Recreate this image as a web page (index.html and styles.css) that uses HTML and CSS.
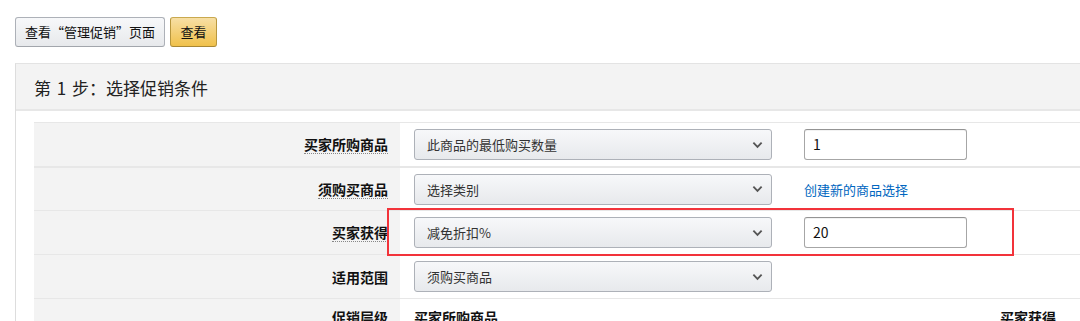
FILE: index.html
```html
<!DOCTYPE html>
<html lang="zh-CN">
<head>
<meta charset="utf-8">
<link rel="stylesheet" href="styles.css">
</head>
<body>
<div class="topbar">
  <button class="btn btn-default">查看“管理促销”页面</button>
  <button class="btn btn-primary">查看</button>
</div>
<div class="panel">
  <div class="panel-head">第 1 步：选择促销条件</div>
  <div class="panel-body">
    <div class="row">
      <div class="label"><span class="dotted">买家所购商品</span></div>
      <div class="field">
        <div class="select"><span>此商品的最低购买数量</span><svg class="chev" viewBox="0 0 12 8"><path d="M1.5 1.5 L6 6 L10.5 1.5" fill="none" stroke="#555" stroke-width="2"/></svg></div>
        <div class="input">1</div>
      </div>
    </div>
    <div class="row">
      <div class="label"><span class="dotted">须购买商品</span></div>
      <div class="field">
        <div class="select"><span>选择类别</span><svg class="chev" viewBox="0 0 12 8"><path d="M1.5 1.5 L6 6 L10.5 1.5" fill="none" stroke="#555" stroke-width="2"/></svg></div>
        <a class="link">创建新的商品选择</a>
      </div>
    </div>
    <div class="row highlight-row">
      <div class="label"><span class="dotted">买家获得</span></div>
      <div class="field">
        <div class="select"><span>减免折扣%</span><svg class="chev" viewBox="0 0 12 8"><path d="M1.5 1.5 L6 6 L10.5 1.5" fill="none" stroke="#555" stroke-width="2"/></svg></div>
        <div class="input">20</div>
      </div>
      <div class="redbox"></div>
    </div>
    <div class="row">
      <div class="label"><span>适用范围</span></div>
      <div class="field">
        <div class="select"><span>须购买商品</span><svg class="chev" viewBox="0 0 12 8"><path d="M1.5 1.5 L6 6 L10.5 1.5" fill="none" stroke="#555" stroke-width="2"/></svg></div>
      </div>
    </div>
    <div class="row last">
      <div class="label"><span>促销层级</span></div>
      <div class="field tier">
        <span class="tier-a">买家所购商品</span>
        <span class="tier-b">买家获得</span>
      </div>
    </div>
  </div>
</div>
</body>
</html>
```
FILE: styles.css
```css
html, body {
  margin: 0;
  padding: 0;
  background: #fff;
  overflow: hidden;
  font-family: "Noto Sans CJK SC", "Noto Sans", "Liberation Sans", sans-serif;
  color: #111;
}
.topbar {
  display: flex;
  gap: 5px;
  padding: 17px 0 0 15px;
}
.btn {
  height: 30px;
  border-radius: 3px;
  font-family: inherit;
  font-size: 13px;
  color: #111;
  padding: 0;
  cursor: pointer;
  line-height: 28px;
  white-space: nowrap;
  text-align: center;
}
.btn-default {
  width: 150px;
  background: linear-gradient(#f7f8fa, #e7e9ec);
  border: 1px solid #adb1b8;
  border-bottom-color: #a2a6ac;
}
.btn-primary {
  width: 47px;
  background: linear-gradient(#f7dfa5, #f0c14b);
  border: 1px solid #a88734;
  border-color: #c9a94f #b8973e #a88734;
}
.panel {
  margin: 16px 0 0 15px;
  width: 1120px;
  border-left: 1px solid #dddddd;
  border-top: 1px solid #e3e3e3;
}
.panel-head {
  height: 45px;
  background: #f3f3f3;
  border-bottom: 2px solid #e7e7e7;
  padding-left: 18px;
  font-size: 17px;
  line-height: 48px;
  color: #222;
  word-spacing: 2px;
}
.panel-body {
  padding: 11px 0 0 18px;
}
.row {
  display: flex;
  height: 43px;
  border-top: 1px solid #e7e7e7;
  position: relative;
}
.row:nth-child(2) {
  border-top-width: 2px;
  height: 42px;
}
.label {
  width: 354px;
  padding-right: 12px;
  background: #f3f3f3;
  display: flex;
  align-items: center;
  justify-content: flex-end;
  font-size: 14px;
  font-weight: bold;
  color: #111;
}
.dotted {
  border-bottom: 1px dotted #888;
  line-height: 18px;
}
.field {
  flex: 1;
  display: flex;
  align-items: center;
  padding-left: 14px;
}
.select {
  width: 344px;
  height: 29px;
  border: 1px solid #adb1b8;
  border-radius: 3px;
  background: linear-gradient(#f7f8fa, #e7e9ec);
  display: flex;
  align-items: center;
  justify-content: space-between;
  padding: 0 0 0 12px;
  box-sizing: content-box;
  font-size: 13px;
  color: #333;
}
.chev {
  width: 11px;
  height: 8px;
  margin-right: 8px;
}
.input {
  margin-left: 32px;
  width: 153px;
  height: 29px;
  border: 1px solid #a6a6a6;
  border-top-color: #949494;
  border-radius: 3px;
  box-shadow: inset 0 1px 0 rgba(0,0,0,0.05);
  padding-left: 8px;
  font-size: 14px;
  line-height: 29px;
  color: #111;
  background: #fff;
}
.link {
  margin-left: 32px;
  color: #0066c0;
  font-size: 13px;
}
.redbox {
  position: absolute;
  z-index: 2;
  left: 353px;
  top: -3px;
  width: 623px;
  height: 44px;
  border: 2px solid #f2333a;
}
.tier {
  align-items: flex-start;
  padding-top: 8px;
  font-size: 14px;
  font-weight: bold;
}
.last .label {
  align-items: flex-start;
  padding-top: 8px;
}
.tier-a {
  width: 586px;
}
```
